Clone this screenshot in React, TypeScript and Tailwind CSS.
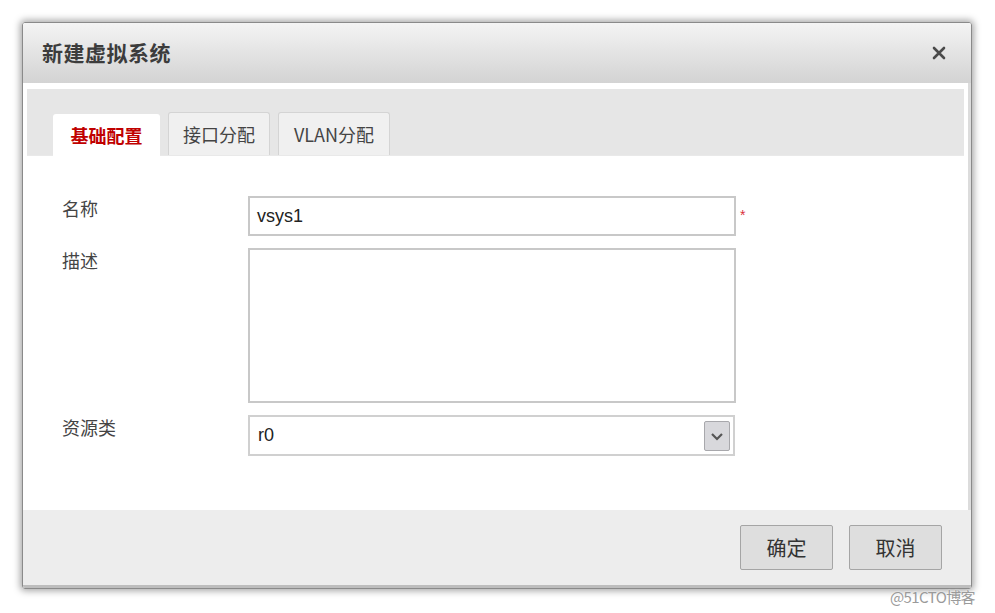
const cjk = { fontFamily: '"Noto Sans CJK SC", "Liberation Sans", sans-serif' };
const latin = { fontFamily: '"Liberation Sans", "Noto Sans CJK SC", sans-serif' };

const tabs = [
  { label: "基础配置", active: true, w: "w-[107px]" },
  { label: "接口分配", active: false, w: "w-[102px]" },
  { label: "VLAN分配", active: false, w: "w-[112px]" },
];

function CloseIcon() {
  return (
    <svg width="16" height="16" viewBox="0 0 16 16">
      <path d="M3 3 L13 13 M13 3 L3 13" stroke="#4a4a4a" strokeWidth="2.6" strokeLinecap="round" />
    </svg>
  );
}

function Field({ label, children }: { label: string; children: React.ReactNode }) {
  return (
    <div className="flex items-start">
      <div className="w-[221px] pl-[35px] text-[18px] leading-[24px] text-[#444]" style={cjk}>
        {label}
      </div>
      {children}
    </div>
  );
}

export default function App() {
  return (
    <div className="relative w-[995px] h-[613px] bg-white pl-[22px] pt-[22px] overflow-hidden">
      <div className="w-[950px] h-[567px] flex flex-col border border-[#8a8a8a] rounded-[3px] shadow-[0_0_7px_2px_rgba(0,0,0,0.35)] overflow-hidden">
        {/* header */}
        <div className="h-[60px] shrink-0 flex items-center justify-between pl-[19px] pr-[24px] bg-linear-to-b from-[#f4f4f4] to-[#d3d3d3]">
          <span className="text-[21px] font-bold text-[#3c3c3c] tracking-[0.5px]" style={cjk}>
            新建虚拟系统
          </span>
          <CloseIcon />
        </div>

        {/* body */}
        <div className="flex-1 flex flex-col bg-white px-[4px] pt-[6px] border-r-[3px] border-[#dcdcdc]">
          <div className="h-[67px] shrink-0 flex items-end gap-[8px] pl-[26px] bg-[#e6e6e6] border-b border-[#e9e9e9]">
            {tabs.map((t) =>
              t.active ? (
                <div
                  key={t.label}
                  className={`${t.w} h-[42px] -mb-px flex items-center justify-center bg-white rounded-t-[3px] text-[18px] font-bold text-[#c00000]`}
                  style={cjk}
                >
                  {t.label}
                </div>
              ) : (
                <div
                  key={t.label}
                  className={`${t.w} h-[43px] flex items-center justify-center bg-[#f0f0f0] border border-b-0 border-[#d4d4d4] rounded-t-[3px] text-[18px] text-[#444]`}
                  style={cjk}
                >
                  {t.label}
                </div>
              )
            )}
          </div>

          <div className="flex-1 flex flex-col gap-[12px] pt-[40px]">
            <Field label="名称">
              <div className="flex items-center">
                <div className="w-[488px] h-[40px] border-2 border-[#c8c8c8] flex items-center pl-[7px] text-[18px] text-[#222]" style={latin}>
                  vsys1
                </div>
                <span className="ml-[4px] -mt-[2px] text-[14px] text-[#d9303a]" style={latin}>*</span>
              </div>
            </Field>
            <Field label="描述">
              <div className="w-[488px] h-[155px] border-2 border-[#c8c8c8]" />
            </Field>
            <Field label="资源类">
              <div className="w-[487px] h-[41px] border-2 border-[#d0d0d0] flex items-center justify-between pl-[8px] pr-[3px] text-[18px] text-[#222]" style={latin}>
                r0
                <div className="w-[26px] h-[30px] bg-[#d8d8dc] border border-[#a8a8ac] rounded-[2px] flex items-center justify-center">
                  <svg width="14" height="10" viewBox="0 0 14 10">
                    <path d="M2 3 L7 8 L12 3" fill="none" stroke="#555" strokeWidth="2.2" />
                  </svg>
                </div>
              </div>
            </Field>
          </div>
        </div>

        {/* footer */}
        <div className="h-[78px] shrink-0 flex justify-end items-start gap-[16px] pt-[15px] pr-[29px] bg-[#ededed] border-b-[3px] border-[#bdbdbd]">
          {["确定", "取消"].map((b) => (
            <button
              key={b}
              className="w-[93px] h-[45px] bg-[#dedede] border border-[#a5a5a5] rounded-[2px] text-[20px] text-[#333]"
              style={cjk}
            >
              {b}
            </button>
          ))}
        </div>
      </div>

      <span
        className="absolute right-[20px] bottom-[5px] text-[15px] tracking-[-0.6px] text-[#9a9a9a] [text-shadow:0_0_2px_#fff]"
        style={cjk}
      >
        @51CTO博客
      </span>
    </div>
  );
}
